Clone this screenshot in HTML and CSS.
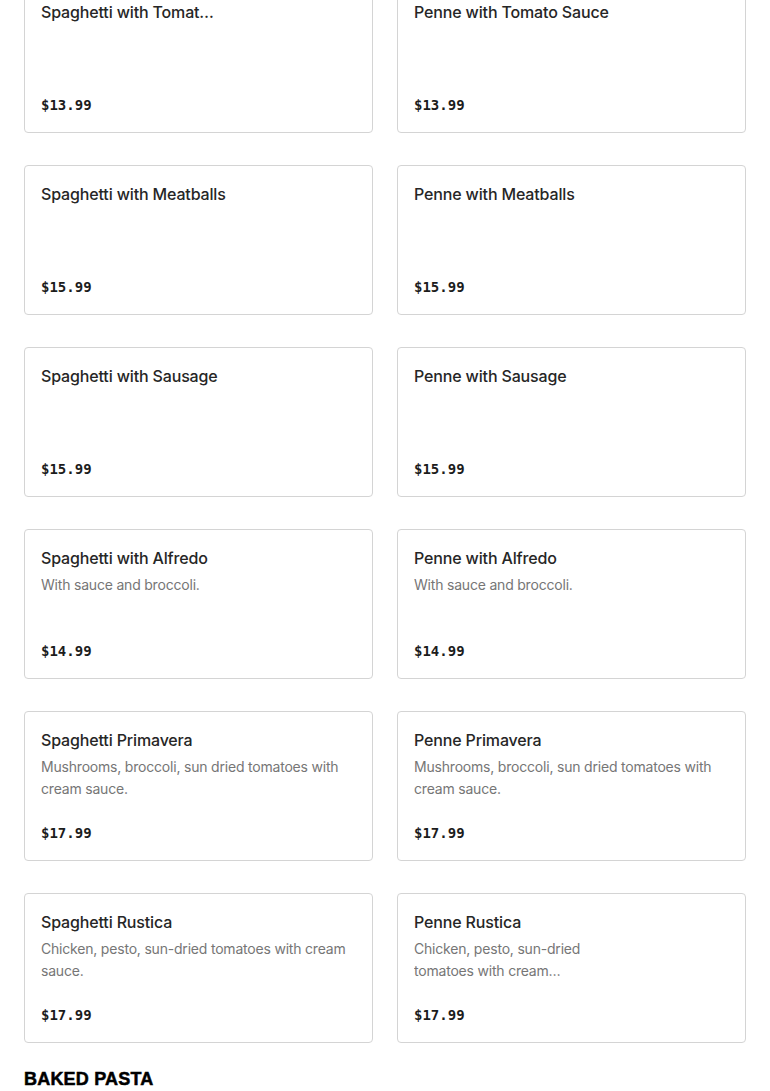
FILE: index.html
```html
<!DOCTYPE html>
<html>
<head>
<meta charset="utf-8">
<link rel="stylesheet" href="styles.css">
</head>
<body>
<div class="page">
  <div class="grid">
    <div class="card has-image"><div class="info"><div class="title">Spaghetti with Tomato Sauce</div></div><div class="price">$13.99</div></div>
    <div class="card"><div class="info"><div class="title">Penne with Tomato Sauce</div></div><div class="price">$13.99</div></div>
    <div class="card"><div class="info"><div class="title">Spaghetti with Meatballs</div></div><div class="price">$15.99</div></div>
    <div class="card"><div class="info"><div class="title">Penne with Meatballs</div></div><div class="price">$15.99</div></div>
    <div class="card"><div class="info"><div class="title">Spaghetti with Sausage</div></div><div class="price">$15.99</div></div>
    <div class="card"><div class="info"><div class="title">Penne with Sausage</div></div><div class="price">$15.99</div></div>
    <div class="card"><div class="info"><div class="title">Spaghetti with Alfredo</div><div class="desc">With sauce and broccoli.</div></div><div class="price">$14.99</div></div>
    <div class="card"><div class="info"><div class="title">Penne with Alfredo</div><div class="desc">With sauce and broccoli.</div></div><div class="price">$14.99</div></div>
    <div class="card"><div class="info"><div class="title">Spaghetti Primavera</div><div class="desc">Mushrooms, broccoli, sun dried tomatoes with cream sauce.</div></div><div class="price">$17.99</div></div>
    <div class="card"><div class="info"><div class="title">Penne Primavera</div><div class="desc">Mushrooms, broccoli, sun dried tomatoes with cream sauce.</div></div><div class="price">$17.99</div></div>
    <div class="card"><div class="info"><div class="title">Spaghetti Rustica</div><div class="desc">Chicken, pesto, sun-dried tomatoes with cream sauce.</div></div><div class="price">$17.99</div></div>
    <div class="card has-image"><div class="info"><div class="title">Penne Rustica</div><div class="desc">Chicken, pesto, sun-dried tomatoes with cream sauce.</div></div><div class="price">$17.99</div></div>
  </div>
  <h2 class="section">BAKED PASTA</h2>
</div>
</body>
</html>
```
FILE: styles.css
```css
html, body {
  margin: 0;
  padding: 0;
  background: #ffffff;
}
.page {
  padding: 0 24px;
  margin-top: -17px;
  font-family: Inter, "Noto Sans", sans-serif;
}
.grid {
  display: grid;
  grid-template-columns: 1fr 1fr;
  column-gap: 24px;
  row-gap: 32px;
}
.card {
  box-sizing: border-box;
  height: 150px;
  border: 1px solid #d4d4d4;
  border-radius: 4px;
  padding: 16px 16px 15px 16px;
  display: flex;
  flex-direction: column;
  justify-content: space-between;
}
.has-image .info {
  max-width: 176px;
}
.title {
  font-size: 16px;
  font-weight: 500;
  line-height: 24px;
  color: #262626;
  white-space: nowrap;
  overflow: hidden;
  text-overflow: ellipsis;
  letter-spacing: -0.15px;
}
.desc {
  margin-top: 4px;
  font-size: 14px;
  line-height: 22px;
  color: #767676;
  letter-spacing: -0.2px;
  display: -webkit-box;
  -webkit-line-clamp: 2;
  -webkit-box-orient: vertical;
  overflow: hidden;
}
.price {
  font-family: "DejaVu Sans Mono", "Liberation Mono", monospace;
  font-weight: 700;
  font-size: 14px;
  line-height: 24px;
  color: #1c1c1c;
}
.section {
  margin: 24px 0 0 0;
  font-family: "Liberation Sans", Arial, sans-serif;
  font-weight: 900;
  font-size: 18px;
  line-height: 24px;
  letter-spacing: 0.2px;
  -webkit-text-stroke: 0.5px #000;
  color: #000;
}
```
